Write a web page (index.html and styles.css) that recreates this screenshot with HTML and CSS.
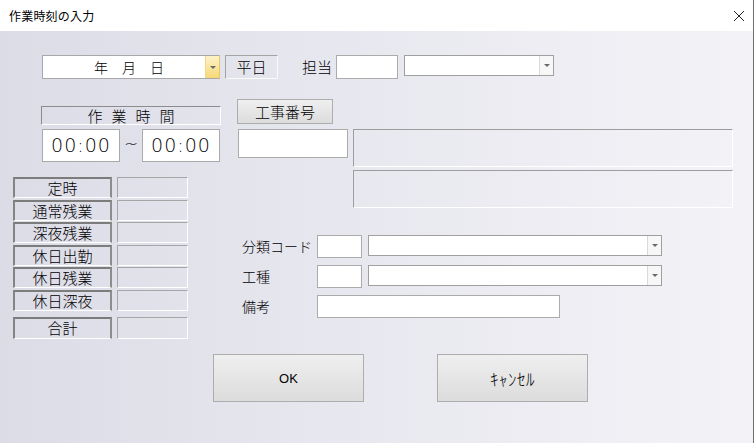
FILE: index.html
```html
<!DOCTYPE html>
<html lang="ja">
<head>
<meta charset="utf-8">
<title>作業時刻の入力</title>
<link rel="stylesheet" href="styles.css">
</head>
<body>
<div class="window">
  <div class="titlebar">
    <span class="title">作業時刻の入力</span>
    <svg class="close" width="12" height="12" viewBox="0 0 12 12"><path d="M1 1L11 11M11 1L1 11" stroke="#222" stroke-width="1" fill="none"/></svg>
  </div>
  <div class="client">
    <div class="row-top">
      <div class="date-combo">
        <span class="date-text">年　月　日</span>
        <span class="date-btn"><span class="tri"></span></span>
      </div>
      <div class="daytype">平日</div>
      <span class="lbl tanto-lbl">担当</span>
      <div class="textbox tanto-box"></div>
      <div class="combo tanto-combo"><span class="combo-btn"><span class="tri"></span></span></div>
    </div>
    <div class="main">
      <div class="left">
        <div class="hours-head">作業時間</div>
        <div class="time-row">
          <div class="time-box">00:00</div>
          <span class="tilde">~</span>
          <div class="time-box">00:00</div>
        </div>
        <div class="sum-table">
          <div class="sum-lbl">定時</div><div class="sum-val"></div>
          <div class="sum-lbl">通常残業</div><div class="sum-val"></div>
          <div class="sum-lbl">深夜残業</div><div class="sum-val"></div>
          <div class="sum-lbl">休日出勤</div><div class="sum-val"></div>
          <div class="sum-lbl">休日残業</div><div class="sum-val"></div>
          <div class="sum-lbl">休日深夜</div><div class="sum-val"></div>
          <div class="sum-lbl total">合計</div><div class="sum-val total"></div>
        </div>
      </div>
      <div class="right">
        <button class="btn koji-btn">工事番号</button>
        <div class="koji-row">
          <div class="textbox koji-box"></div>
          <div class="sunken-stack">
            <div class="sunken"></div>
            <div class="sunken"></div>
          </div>
        </div>
        <div class="fields">
          <div class="field-row">
            <span class="lbl field-lbl">分類コード</span>
            <div class="textbox code-box"></div>
            <div class="combo field-combo"><span class="combo-btn"><span class="tri"></span></span></div>
          </div>
          <div class="field-row">
            <span class="lbl field-lbl">工種</span>
            <div class="textbox code-box"></div>
            <div class="combo field-combo"><span class="combo-btn"><span class="tri"></span></span></div>
          </div>
          <div class="field-row">
            <span class="lbl field-lbl">備考</span>
            <div class="textbox note-box"></div>
          </div>
        </div>
      </div>
    </div>
    <div class="buttons">
      <button class="btn big-btn ok">OK</button>
      <button class="btn big-btn cancel">ｷｬﾝｾﾙ</button>
    </div>
  </div>
</div>
</body>
</html>
```
FILE: styles.css
```css
* { box-sizing: border-box; }
html, body { margin: 0; padding: 0; }
body {
  width: 754px;
  height: 443px;
  overflow: hidden;
  font-family: "Noto Sans CJK JP", "Liberation Sans", sans-serif;
  font-weight: 300;
  color: #000;
  background: #dcdce8;
}
.window {
  width: 754px;
  height: 443px;
  border-right: 1px solid #6f6f6f;
  display: flex;
  flex-direction: column;
}
.titlebar {
  height: 31px;
  background: #fff;
  display: flex;
  align-items: center;
  justify-content: space-between;
  padding: 0 6px 0 9px;
  flex: none;
}
.title { font-size: 12px; letter-spacing: 0.2px; font-weight: 400; }
.close { margin-right: 2px; }
.client {
  flex: 1;
  background: linear-gradient(to right, #dcdce7 0%, #e6e6ee 40%, #f3f3f7 100%);
  padding-top: 24px;
}
.lbl { font-size: 14px; line-height: 1; }
.tri {
  width: 0; height: 0;
  border-left: 3px solid transparent;
  border-right: 3px solid transparent;
  border-top: 3px solid #6a6a6a;
}
/* top row */
.row-top {
  display: flex;
  align-items: flex-start;
  padding-left: 42px;
  height: 24px;
}
.date-combo {
  width: 178px; height: 24px;
  background: #fff;
  border: 1px solid #a8a8a8;
  border-right-color: #e5c764;
  display: flex;
}
.date-text {
  flex: 1;
  font-size: 14px;
  line-height: 22px;
  text-align: center;
  padding-left: 10px;
}
.date-btn {
  width: 14px;
  background: linear-gradient(to bottom, #fdf3c8, #f7d878);
  border-left: 1px solid #f0d888;
  display: flex; align-items: center; justify-content: center;
}
.daytype {
  margin-left: 5px;
  width: 53px; height: 24px;
  border: 1px solid #a4a4a4;
  border-right-color: #fafafa;
  border-bottom-color: #fafafa;
  font-size: 15px;
  line-height: 22px;
  text-align: center;
}
.tanto-lbl { margin-left: 24px; margin-top: 4px; font-size: 15px; }
.tanto-box { margin-left: 4px; width: 62px; height: 24px; }
.textbox {
  background: #fff;
  border: 1px solid #ababab;
}
.combo {
  background: #fff;
  border: 1px solid #a0a0a0;
  display: flex;
  justify-content: flex-end;
}
.combo-btn {
  width: 14px;
  border-left: 1px solid #d9d9d9;
  background: #f7f7f7;
  display: flex; align-items: center; justify-content: center;
}
.tanto-combo { margin-left: 6px; width: 150px; height: 21px; }
/* main */
.main {
  display: flex;
  height: 259px;
}
.left {
  width: 224px;
  padding-left: 13px;
  display: flex;
  flex-direction: column;
}
.hours-head {
  margin-top: 27px;
  margin-left: 28px;
  width: 180px; height: 19px;
  border: 1px solid #8c8c8c;
  border-right-color: #fff;
  border-bottom-color: #fff;
  font-size: 15px;
  line-height: 17px;
  text-align: center;
  letter-spacing: 9px;
  padding-left: 9px;
}
.time-row {
  margin-top: 4px;
  margin-left: 29px;
  display: flex;
  align-items: center;
}
.time-box {
  width: 78px; height: 33px;
  background: #fff;
  border: 1px solid #aaa;
  font-family: "DejaVu Sans", "Liberation Sans", sans-serif;
  font-weight: 200;
  font-size: 19px;
  line-height: 31px;
  text-align: center;
  letter-spacing: 1px;
}
.tilde {
  width: 22px;
  text-align: center;
  font-family: "DejaVu Sans", sans-serif;
  font-weight: 200;
  font-size: 17px;
  margin-top: -4px;
}
.sum-table {
  margin-top: 15px;
  display: grid;
  grid-template-columns: 99px 71px;
  column-gap: 5px;
  grid-auto-rows: 21px;
  row-gap: 1.6px;
}
.sum-lbl {
  border-top: 2px solid #7c7c7c;
  border-left: 2px solid #848484;
  border-right: 2px solid #8c8c8c;
  border-bottom: 1px solid #fff;
  font-size: 15px;
  line-height: 17px;
  text-align: center;
}
.sum-val {
  border-top: 1px solid #a6a6a6;
  border-left: 1px solid #a6a6a6;
  border-right: 1px solid #fff;
  border-bottom: 1px solid #fff;
}
.sum-lbl.total, .sum-val.total { margin-top: 4px; height: 22px; }
.right {
  margin-left: 13px;
  display: flex;
  flex-direction: column;
}
.btn {
  font-family: "Noto Sans CJK JP", "Liberation Sans", sans-serif;
  font-weight: 300;
  color: #000;
  background: linear-gradient(to bottom, #efefef, #dcdcdc);
  border: 1px solid #adadad;
  border-radius: 0;
  padding: 0;
}
.koji-btn {
  margin-top: 20px;
  width: 96px; height: 25px;
  font-size: 15px;
  line-height: 22px;
}
.koji-row {
  margin-top: 5px;
  display: flex;
  gap: 5px;
}
.koji-box { margin-left: 1px; width: 110px; height: 29px; }
.sunken-stack {
  display: flex;
  flex-direction: column;
  gap: 3px;
}
.sunken {
  width: 380px; height: 38px;
  border-top: 1px solid #9d9d9d;
  border-left: 1px solid #9d9d9d;
  border-right: 1px solid #fff;
  border-bottom: 1px solid #fff;
}
.fields {
  margin-top: 27px;
  display: flex;
  flex-direction: column;
  gap: 7px;
}
.field-row {
  display: flex;
  align-items: flex-start;
  height: 23px;
}
.field-lbl { width: 80px; padding-left: 5px; margin-top: 4px; font-size: 14px; }
.code-box { width: 45px; height: 23px; }
.field-combo { margin-left: 6px; width: 294px; height: 21px; }
.note-box { width: 243px; height: 23px; }
/* buttons */
.buttons {
  margin-top: 16px;
  padding-left: 213px;
  display: flex;
  gap: 73px;
}
.big-btn {
  width: 151px; height: 48px;
  font-size: 13px;
}
.ok { font-family: "Liberation Sans", sans-serif; font-weight: 400; font-size: 13px; }
.cancel { font-size: 17px; letter-spacing: 0.5px; }
```
